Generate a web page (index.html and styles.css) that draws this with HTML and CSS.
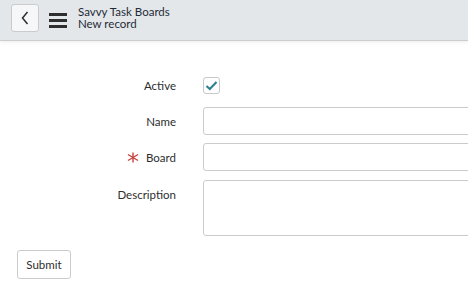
FILE: index.html
```html
<!DOCTYPE html>
<html lang="en">
<head>
    <meta charset="UTF-8">
    <meta name="viewport" content="width=device-width, initial-scale=1.0">
    <title>Savvy Task Boards - New record</title>
    <link rel="stylesheet" href="styles.css">
</head>
<body>
    <!-- Header -->
    <header class="navbar">
        <button class="back-btn" aria-label="Back">
            <svg width="8" height="14" viewBox="0 0 8 14">
                <polyline points="6.5,1 1.5,7 6.5,13" fill="none" stroke="#2e2e2e" stroke-width="1.5"/>
            </svg>
        </button>
        <div class="menu-icon">
            <span></span><span></span><span></span>
        </div>
        <div class="title">
            <div>Savvy Task Boards</div>
            <div>New record</div>
        </div>
    </header>

    <!-- Form -->
    <main class="page">
        <form class="record-form">
            <div class="form-row">
                <label class="field-label">Active</label>
                <div class="field">
                    <span class="checkbox">
                        <svg width="13" height="11" viewBox="0 0 13 11">
                            <polyline points="1.5,6 4.8,9 11.5,2" fill="none" stroke="#2a7f94" stroke-width="2"/>
                        </svg>
                    </span>
                </div>
            </div>
            <div class="form-row">
                <label class="field-label">Name</label>
                <input class="text-input" type="text">
            </div>
            <div class="form-row">
                <label class="field-label">
                    <svg class="required" width="12" height="11" viewBox="0 0 12 11">
                        <g stroke="#c8413b" stroke-width="1.4">
                            <line x1="6" y1="0.5" x2="6" y2="10.5"/>
                            <line x1="1" y1="2.5" x2="11" y2="8.5"/>
                            <line x1="1" y1="8.5" x2="11" y2="2.5"/>
                        </g>
                    </svg>Board
                </label>
                <input class="text-input" type="text">
            </div>
            <div class="form-row desc-row">
                <label class="field-label">Description</label>
                <textarea class="text-area"></textarea>
            </div>
            <div class="actions">
                <button type="button" class="submit-btn">Submit</button>
            </div>
        </form>
    </main>
</body>
</html>
```

FILE: styles.css
```css
/* Global Styles */
body {
    margin: 0;
    font-family: 'Lato', 'Liberation Sans', sans-serif;
    font-size: 11.5px;
    color: #2e2e2e;
    background: #fff;
    overflow: hidden;
}

/* Header */
.navbar {
    display: flex;
    align-items: center;
    height: 28px;
    padding: 4px 0 8px 11px;
    background: #e4e7ea;
    border-bottom: 1px solid #cbcdcf;
    box-shadow: 0 1px 4px rgba(0, 0, 0, 0.08);
}

.back-btn {
    width: 28px;
    height: 28px;
    padding: 0;
    display: flex;
    align-items: center;
    justify-content: center;
    background: #f6f7f8;
    border: 1px solid #c9cbcd;
    border-radius: 3px;
}

.menu-icon {
    display: flex;
    flex-direction: column;
    gap: 3px;
    margin: 4px 11px 0 10px;
}

.menu-icon span {
    display: block;
    width: 18px;
    height: 3px;
    background: #2e2e2e;
}

.title {
    line-height: 12px;
    color: #1f2b38;
}

/* Form */
.page {
    overflow: hidden;
}

.record-form {
    width: 540px;
    padding-top: 30px;
}

.form-row {
    display: grid;
    grid-template-columns: 176px 1fr;
    column-gap: 27px;
    margin-bottom: 8px;
}

.desc-row {
    margin-top: 9px;
}

.field-label {
    display: flex;
    justify-content: flex-end;
    align-items: center;
    height: 28px;
}

.required {
    margin-right: 7px;
}

.field {
    display: flex;
    align-items: center;
    height: 28px;
}

.checkbox {
    width: 15px;
    height: 15px;
    border: 1px solid #c6c8ca;
    border-radius: 3px;
    display: flex;
    align-items: center;
    justify-content: center;
}

.text-input,
.text-area {
    box-sizing: border-box;
    width: 100%;
    height: 28px;
    margin: 0;
    border: 1px solid #c9cbcd;
    border-radius: 3px;
    font: inherit;
}

.text-area {
    height: 56px;
    resize: none;
}

.actions {
    padding: 6px 0 14px 17px;
}

.submit-btn {
    height: 29px;
    width: 54px;
    padding: 0;
    font: inherit;
    color: #2e2e2e;
    background: #fff;
    border: 1px solid #c9cbcd;
    border-radius: 3px;
}
```
